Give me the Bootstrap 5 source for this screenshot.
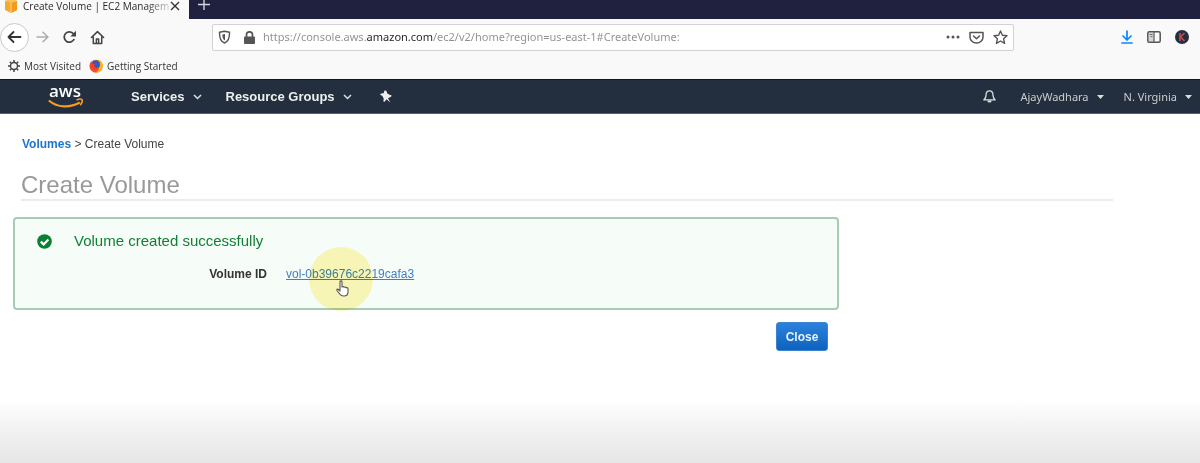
<!DOCTYPE html>
<html lang="en">
<head>
<meta charset="utf-8">
<meta name="viewport" content="width=device-width, initial-scale=1">
<title>Create Volume | EC2 Management Console</title>
<link href="https://cdn.jsdelivr.net/npm/bootstrap@5.3.0/dist/css/bootstrap.min.css" rel="stylesheet">
<style>
  body { font-family: "Liberation Sans", Arial, sans-serif; font-size: 12px; line-height: 16px; color: #444; background: #fff; }
  svg { display: block; flex: none; }
  .plain-btn { background: none; border: 0; padding: 0; color: inherit; font: inherit; }
  .browser { font-family: "Open Sans", "Noto Sans", sans-serif; font-size: 10px; line-height: 16px; background: #f9f9fa; color: #333; }
  .tab-strip { height: 19px; background: #20213f; }
  .tab-strip .open-tab { height: 19px; width: 189px; background: #f9f9fa; color: #222; padding: 0 9px 8px 4px; }
  .tab-title { white-space: nowrap; margin-left: 5px; line-height: 14px; color: transparent; background: linear-gradient(90deg, #222 84%, #ccc) text; -webkit-background-clip: text; }
  .tool-row { height: 36px; color: #3e3e40; }
  .tool-row .back-btn { width: 29px; height: 29px; border: 1px solid #c8c8ca; border-radius: 50%; background: #fff; }
  .nav-buttons { gap: 13px; padding-left: 7px; }
  .address { width: 802px; height: 27px; background: #fff; border: 1px solid #d2d2d4; border-radius: 2px; padding: 0 5px; color: #555; }
  .address .lock { margin-left: 13px; }
  .address input { border: 0; outline: 0; padding: 0; min-width: 0; font-family: "Noto Sans", sans-serif; font-size: 11px;
    background: linear-gradient(90deg, #8e8e90 104px, #222 104px, #222 170px, #8e8e90 170px) text; -webkit-background-clip: text; -webkit-text-fill-color: transparent; }
  .address-icons { gap: 9px; }
  .tool-icons { gap: 14px; padding-right: 11px; }
  .bookmarks { height: 24px; padding-bottom: 2px; }
  .bookmarks a { color: #333; text-decoration: none; }
  .aws-nav { height: 35px; background: #232f3e; border-top: 1px solid #15151f; border-bottom: 1px solid #59616c; color: #eee; }
  .aws-nav .main-item { font-weight: 700; font-size: 13px; }
  .aws-nav .user-item { font-family: "Noto Sans", sans-serif; font-size: 11px; color: #ccc; }
  .user-items { gap: 20px; }
  .crumbs { padding: 22px 22px 0; }
  .crumbs a { color: #1f75d0; font-weight: 700; text-decoration: none; }
  .page-title { font-size: 24px; line-height: 28px; font-weight: 400; color: #999; margin: 19px 87px 0 21px; border-bottom: 2px solid #ececec; }
  .notice { width: 826px; max-width: 100%; margin: 16px 0 0 13px; padding: 12px 22px 26px; background: #f6fcf7; border: 2px solid #a4cdb3; border-radius: 4px; }
  .notice h2 { font-size: 15px; line-height: 20px; font-weight: 400; color: #118035; margin: 0 0 0 22px; }
  .volume-row { margin-top: 15px; gap: 19px; }
  .volume-row dt { width: 230px; text-align: right; color: #333; }
  .volume-row a { color: #3f7fc9; }
  .halo { position: absolute; left: 23px; top: -19px; width: 64px; height: 64px; border-radius: 50%; background: #fff27a; opacity: .5; mix-blend-mode: multiply; pointer-events: none; }
  .hand { position: absolute; left: 50px; top: 14px; pointer-events: none; }
  .actions { width: 828px; max-width: 100%; padding-top: 12px; }
  .close-btn { height: 29px; width: 52px; padding: 0; font-size: 12px; font-weight: 700; color: #e8f2fc; border: 1px solid #3b82cf; border-radius: 3px; background: linear-gradient(#2b82dd, #0d62bd); }
  .fade-foot { height: 64px; background: linear-gradient(#fff, #f1f1f1 50%, #e6e6e6); }
</style>
</head>
<body class="d-flex flex-column min-vh-100">
<header class="browser">
  <div class="tab-strip d-flex align-items-start">
    <div class="open-tab d-flex align-items-center">
      <svg width="14" height="14" viewBox="0 0 14 14"><path d="M1 2l6-2 6 2v9l-6 3-6-3z" fill="#f7a72b"/><path d="M7 4v10l6-3V2z" fill="#f19a1b"/><path d="M1 2l6 2 6-2-6-2z" fill="#fbc25c"/><path d="M7 4v10" stroke="#fbd58e"/></svg>
      <span class="tab-title">Create Volume | EC2 Managem</span>
      <button class="plain-btn ms-auto" type="button" aria-label="Close tab"><svg width="10" height="10" viewBox="0 0 10 10" stroke="#333" stroke-width="1.4"><path d="M1 1l8 8M9 1L1 9"/></svg></button>
    </div>
    <button class="plain-btn ms-2" type="button" aria-label="New tab"><svg width="13" height="11" viewBox="0 0 13 11" stroke="#d5d5e0" stroke-width="1.4"><path d="M1 4.500h12M7 0v10"/></svg></button>
  </div>
  <div class="tool-row d-flex align-items-center">
    <button class="back-btn plain-btn d-flex align-items-center justify-content-center" type="button" aria-label="Back"><svg width="15" height="14" viewBox="0 0 15 14" fill="none" stroke="#333" stroke-width="1.8" stroke-linecap="round" stroke-linejoin="round"><path d="M13.500 7H1.500M6.500 2L1.500 7l5 5"/></svg></button>
    <div class="nav-buttons d-flex align-items-center">
      <button class="plain-btn" type="button" aria-label="Forward" disabled><svg width="13" height="12" viewBox="0 0 13 12" fill="none" stroke="#adadaf" stroke-width="1.500" stroke-linecap="round" stroke-linejoin="round"><path d="M1 6h11M7 1.200L12 6 7 10.800"/></svg></button>
      <button class="plain-btn" type="button" aria-label="Reload"><svg width="15" height="14" viewBox="0 0 15 14" fill="none" stroke="#444" stroke-width="1.800"><path d="M11.500 3.800A5.200 5.200 0 1 0 12.200 9"/><path d="M14 .8v5.700H8.300z" fill="#444" stroke="none"/></svg></button>
      <button class="plain-btn" type="button" aria-label="Home"><svg width="15" height="15" viewBox="0 0 16 15" fill="none" stroke="#444" stroke-width="1.600" stroke-linejoin="round" stroke-linecap="round"><path d="M1.500 7.500L8 1.200l6.500 6.300M3.500 7v6.800h9V7M6.800 13.500V9h2.400v4.500"/></svg></button>
    </div>
    <div class="address d-flex align-items-center mx-auto">
      <svg width="13" height="14" viewBox="0 0 13 14" fill="none" stroke="#555" stroke-width="1.400"><path d="M6.500 1.200Q9 1.800 11.500 2.300C11.700 7.500 10.500 11.500 6.500 13 2.500 11.500 1.300 7.500 1.500 2.300Q4 1.800 6.500 1.200z"/><path d="M7 4v6.500C4.800 9.500 4.300 7 4.400 4.500z" fill="#555" stroke="none"/></svg>
      <svg class="lock" width="11" height="13" viewBox="0 0 11 13"><rect y="5.500" width="11" height="7.500" rx="1" fill="#555"/><path d="M2.500 6V3.800a3 3 0 0 1 6 0V6" fill="none" stroke="#555" stroke-width="1.700"/></svg>
      <input class="flex-grow-1 ms-2" type="text" aria-label="Address" value="https://console.aws.amazon.com/ec2/v2/home?region=us-east-1#CreateVolume:">
      <div class="address-icons d-flex align-items-center">
        <svg width="14" height="4" viewBox="0 0 14 4" fill="#555"><circle cx="2" cy="2" r="1.500"/><circle cx="7" cy="2" r="1.500"/><circle cx="12" cy="2" r="1.500"/></svg>
        <svg width="15" height="13" viewBox="0 0 15 13" fill="none" stroke="#555" stroke-width="1.500" stroke-linecap="round" stroke-linejoin="round"><path d="M1 1.500h13V6a6.500 6 0 0 1-13 0zM4.500 5l3 2.800 3-2.800"/></svg>
        <svg width="15" height="15" viewBox="0 0 15 15" fill="none" stroke="#555" stroke-width="1.400" stroke-linejoin="round"><path d="M7.500 1l1.900 4.200 4.600.5-3.400 3.100 1 4.600-4.100-2.400-4.100 2.400 1-4.600L1 5.700l4.600-.5z"/></svg>
      </div>
    </div>
    <div class="tool-icons d-flex align-items-center">
      <button class="plain-btn" type="button" aria-label="Downloads"><svg width="12" height="14" viewBox="0 0 12 14" fill="none" stroke="#0a84ff" stroke-width="1.700" stroke-linecap="round" stroke-linejoin="round"><path d="M6 1v9M2 6l4 4 4-4M1 13h10"/></svg></button>
      <button class="plain-btn" type="button" aria-label="Sidebar"><svg width="14" height="12" viewBox="0 0 14 12" fill="none" stroke="#555" stroke-width="1.500"><rect x="1.500" y="1.500" width="5" height="9" fill="#d5d5d7" stroke="none"/><rect x=".8" y=".8" width="12.400" height="10.400" rx="1.500"/><path d="M7 1v10" stroke-width="1.200"/><path d="M2.500 3.500h3M3.500 5.500h2" stroke-width=".8"/></svg></button>
      <button class="plain-btn" type="button" aria-label="Account"><svg width="14" height="14" viewBox="0 0 14 14"><circle cx="7" cy="7" r="7" fill="#232f40"/><path d="M5 3v8M9.500 3L5.500 7l4 4" stroke="#c04a4b" stroke-width="1.700" fill="none"/></svg></button>
    </div>
  </div>
  <nav class="bookmarks d-flex align-items-center ps-2" aria-label="Bookmarks">
    <a href="#" class="d-flex align-items-center gap-1"><svg width="12" height="12" viewBox="0 0 12 12" fill="none" stroke="#444"><circle cx="6" cy="6" r="3.500" stroke-width="1.400"/><path d="M6 0v2M6 10v2M0 6h2M10 6h2M1.800 1.800l1.400 1.400M8.800 8.800l1.400 1.400M10.200 1.800L8.800 3.200M3.200 8.800l-1.400 1.400" stroke-width="1.500"/></svg>Most Visited</a>
    <a href="#" class="d-flex align-items-center gap-1 ms-2"><svg width="14" height="14" viewBox="0 0 14 14"><circle cx="7" cy="7.200" r="6.500" fill="#f5502d"/><path d="M9 .5c5 1.500 5.500 6 4.200 9C12 12.500 9 14 6 13.600c4-1 5-5.600 3-9.600z" fill="#ffb31a"/><circle cx="7" cy="5.500" r="4" fill="#2560c4"/><path d="M1.500 3c1 2 3 2 5 2.500-1 .5-1.500 1-1 2 .8 1.500 2.500 1.500 4 .5-1 3-4 4-6 2.500C1.500 9 .8 6 1.500 3z" fill="#f4402e"/></svg>Getting Started</a>
  </nav>
</header>
<nav class="aws-nav d-flex align-items-center" aria-label="AWS">
  <a href="#" aria-label="AWS home" class="ms-5"><svg class="overflow-visible" width="35" height="26" viewBox="0 0 35 26"><text x="1" y="13" font-family="Open Sans, sans-serif" font-size="17" font-weight="600" fill="#fff">aws</text><path d="M.8 16.500c9 7.500 21 7.500 31 2" fill="none" stroke="#f79a1d" stroke-width="2.200"/><path d="M28.500 16c2.500-1 5-1 5.600-.2.500 1.500-.4 3.700-1.900 5.500" fill="none" stroke="#f79a1d" stroke-width="1.600"/></svg></a>
  <button type="button" class="plain-btn main-item d-flex align-items-center gap-2 ms-5">Services <svg width="9" height="6" viewBox="0 0 9 6" fill="none" stroke="#ddd" stroke-width="1.500"><path d="M1 1l3.500 3.500L8 1"/></svg></button>
  <button type="button" class="plain-btn main-item d-flex align-items-center gap-2 ms-4">Resource Groups <svg width="9" height="6" viewBox="0 0 9 6" fill="none" stroke="#ddd" stroke-width="1.500"><path d="M1 1l3.500 3.500L8 1"/></svg></button>
  <button type="button" class="plain-btn ms-4 ps-1" aria-label="Pin shortcuts"><svg width="12" height="13" viewBox="0 0 12 13"><path d="M4.500.5l1.800.2 1 2.800 2.700 1.500 1.500.2-.2 1.400L8 8.300l2.300 4.200-3.700-3.300-2 2.600-1.200-.3.300-2.900L2.200 5.800 0 4.800 1 3.600l2.600-.3z" fill="#eee"/></svg></button>
  <div class="user-items d-flex align-items-center ms-auto pe-2">
    <button type="button" class="plain-btn me-1" aria-label="Notifications"><svg width="13" height="15" viewBox="0 0 15 16" fill="none" stroke="#ddd" stroke-width="1.500" stroke-linejoin="round"><path d="M7.500 1.500C4.500 1.500 3.500 4 3.500 6.500c0 3-1 4-2.500 5.500h13c-1.500-1.500-2.500-2.500-2.500-5.500 0-2.500-1-5-4-5z"/><path d="M5 12.500a2.500 2.500 0 0 0 5 0z" fill="#ddd" stroke="none"/></svg></button>
    <button type="button" class="plain-btn user-item d-flex align-items-center gap-2">AjayWadhara <svg width="7" height="4" viewBox="0 0 7 4"><path d="M0 0h7L3.500 4z" fill="#ddd"/></svg></button>
    <button type="button" class="plain-btn user-item d-flex align-items-center gap-2">N. Virginia <svg width="7" height="4" viewBox="0 0 7 4"><path d="M0 0h7L3.500 4z" fill="#ddd"/></svg></button>
  </div>
</nav>
<main class="flex-grow-1">
  <nav class="crumbs" aria-label="Breadcrumb"><a href="#">Volumes</a> &gt; Create Volume</nav>
  <h1 class="page-title">Create Volume</h1>
  <section class="notice">
    <div class="d-flex align-items-center">
      <svg width="15" height="15" viewBox="0 0 15 15"><circle cx="7.500" cy="7.500" r="7.300" fill="#0b8034"/><path d="M3.800 7.600l2.800 2.800 4.800-5" fill="none" stroke="#fff" stroke-width="2.200"/></svg>
      <h2>Volume created successfully</h2>
    </div>
    <dl class="volume-row d-flex mb-0">
      <dt>Volume ID</dt>
      <dd class="position-relative mb-0"><a href="#">vol-0b39676c2219cafa3</a>
        <span class="halo"></span>
        <svg class="hand" width="14" height="17" viewBox="0 0 14 17"><path d="M4 1.500c0-1 2-1 2 0V7c1-.8 1.800-.5 2 .3.800-.5 1.700-.3 2 .5 1-.4 2 0 2 1V12c0 2.500-1.500 4-4 4-3 0-4-1.500-7-5.500-.6-1 .5-2 1.500-1L4 11z" fill="#fff" stroke="#555" stroke-width="1.100" stroke-linejoin="round"/></svg>
      </dd>
    </dl>
  </section>
  <div class="actions d-flex justify-content-end"><button type="button" class="btn close-btn">Close</button></div>
</main>
<footer class="fade-foot"></footer>
<script src="https://cdn.jsdelivr.net/npm/bootstrap@5.3.0/dist/js/bootstrap.bundle.min.js"></script>
</body>
</html>
